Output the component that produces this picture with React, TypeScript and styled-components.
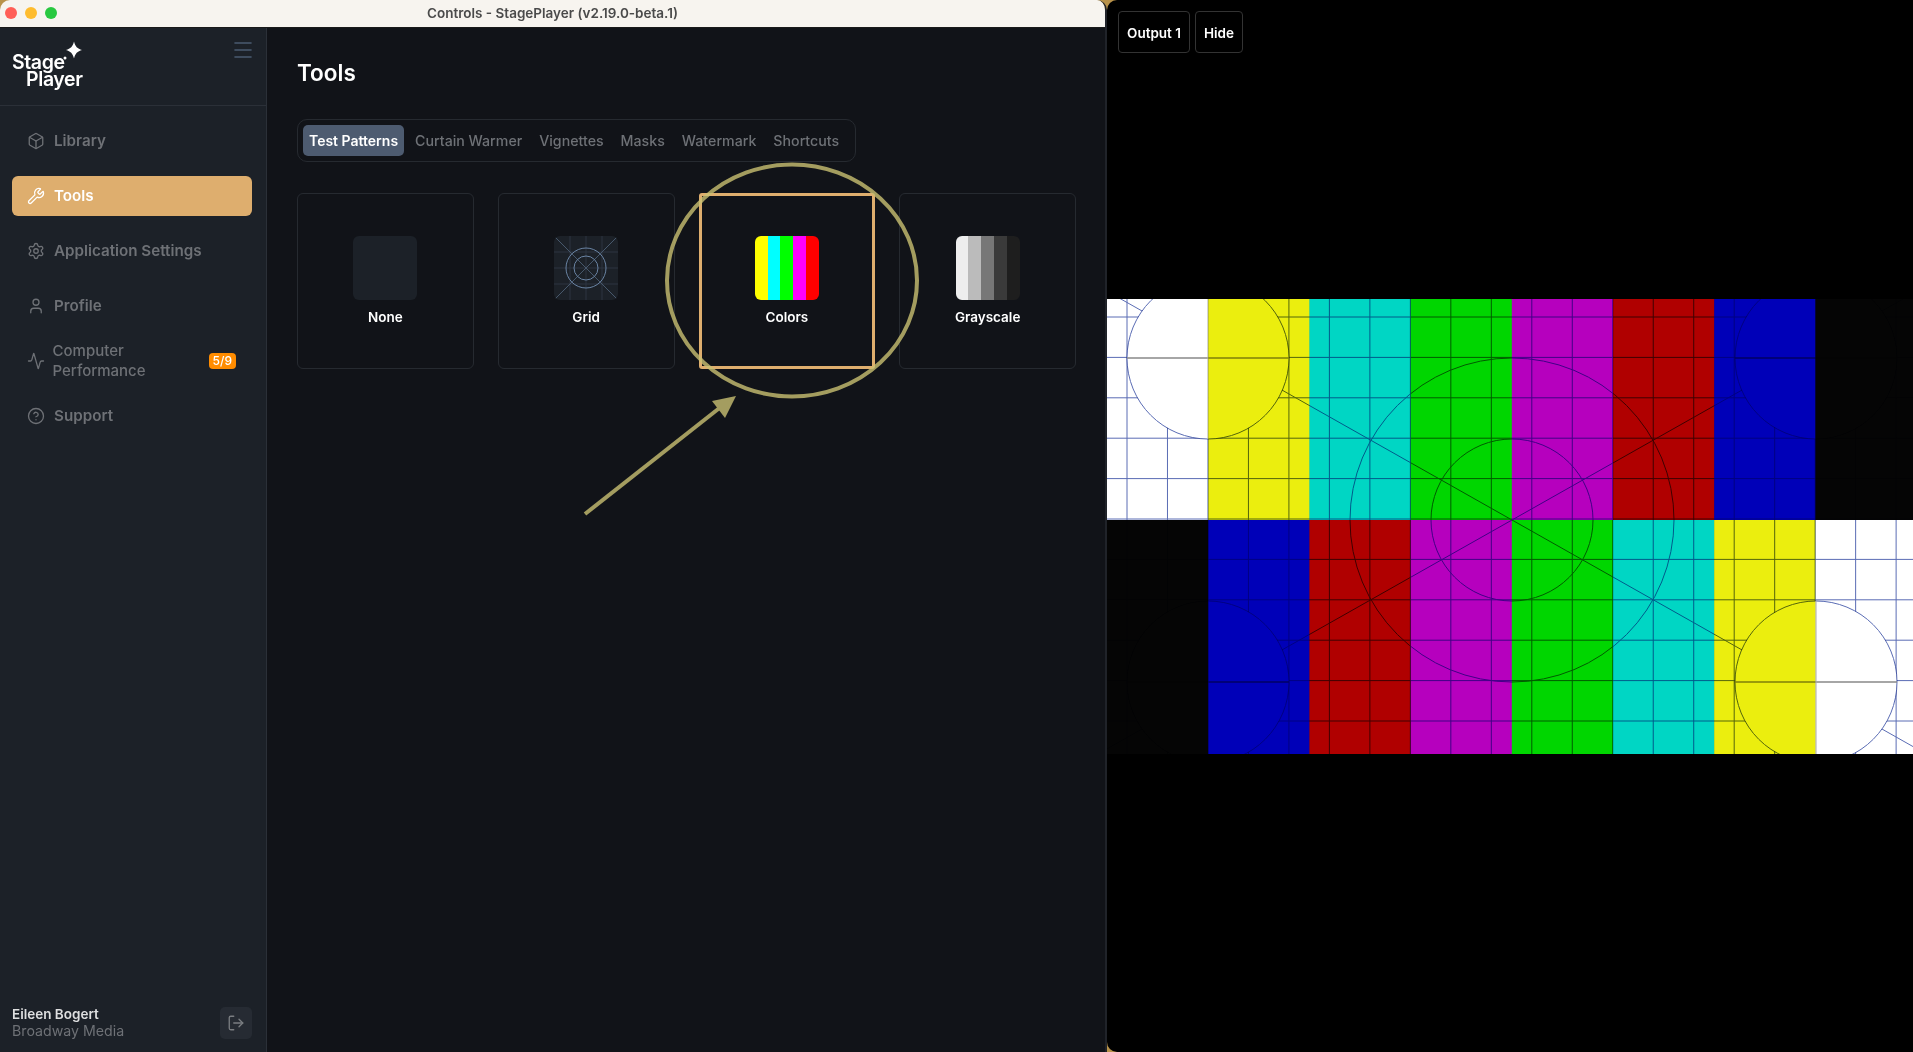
import React from 'react';
import styled, { createGlobalStyle } from 'styled-components';
import { Activity, Box, CircleHelp, LogOut, Menu, Settings, User, Wrench } from 'lucide-react';

const GlobalStyle = createGlobalStyle`
  html, body {
    margin: 0;
    padding: 0;
    background: #b8924a;
  }
  body {
    font-family: Inter, "Noto Sans", sans-serif;
    -webkit-font-smoothing: antialiased;
  }
  * {
    box-sizing: border-box;
  }
`;

const Desktop = styled.div`
  position: relative;
  display: flex;
  width: 1913px;
  height: 1052px;
  overflow: hidden;
`;

const ControlsWindow = styled.div`
  display: flex;
  flex-direction: column;
  width: 1107px;
  height: 100%;
  border-radius: 10px 10px 0 0;
  border-right: 2px solid #202329;
  overflow: hidden;
`;

const TitleBar = styled.div`
  position: relative;
  display: flex;
  align-items: center;
  justify-content: center;
  flex: 0 0 28px;
  padding-bottom: 1px;
  background: #f7f4ef;
  border-bottom: 1px solid #1a1a1a;
  color: #4a4a4a;
  font-size: 13.5px;
  font-weight: 600;
`;

const Lights = styled.div`
  position: absolute;
  left: 5px;
  top: 7px;
  display: flex;
  gap: 8px;
`;

const Light = styled.span<{ $color: string }>`
  width: 12px;
  height: 12px;
  border-radius: 50%;
  background: ${(p) => p.$color};
`;

const Body = styled.div`
  display: flex;
  flex: 1;
  min-height: 0;
`;

const Sidebar = styled.aside`
  display: flex;
  flex-direction: column;
  flex: 0 0 267px;
  background: #1c2128;
  border-right: 1px solid #2b3038;
`;

const SidebarHeader = styled.div`
  display: flex;
  align-items: flex-start;
  justify-content: space-between;
  flex: 0 0 78px;
  padding: 10px 11px 0 12px;
  border-bottom: 1px solid #2b3038;
  color: #4a5b70;
`;

const Logo = styled.div`
  position: relative;
  display: flex;
  flex-direction: column;
  margin-top: 16px;
  color: #fff;
  font-size: 19.5px;
  font-weight: 600;
  line-height: 17px;
  letter-spacing: -0.4px;
`;

const LogoIndent = styled.span`
  margin-left: 14px;
`;

const LogoStar = styled.svg`
  position: absolute;
  left: 50px;
  top: -16px;
`;

const Nav = styled.nav`
  display: flex;
  flex-direction: column;
  flex: 1;
  gap: 15px;
  padding: 15px 14px 0 12px;
`;

const NavItem = styled.div<{ $active?: boolean }>`
  display: flex;
  align-items: center;
  gap: 9px;
  height: 40px;
  padding: 0 16px 0 15px;
  border-radius: 6px;
  background: ${(p) => (p.$active ? '#deae6e' : 'transparent')};
  color: ${(p) => (p.$active ? '#fff' : '#6e7176')};
  font-size: 15.2px;
  font-weight: 600;
  line-height: 20px;

  svg {
    flex: 0 0 auto;
  }
`;

const NavLabel = styled.span<{ $wrapped?: boolean }>`
  flex: 1;
  font-size: ${(p) => (p.$wrapped ? '15px' : 'inherit')};
  font-weight: ${(p) => (p.$wrapped ? 500 : 600)};
  margin-left: ${(p) => (p.$wrapped ? '-1.5px' : '0')};
`;

const Badge = styled.span`
  padding: 1px 4px;
  border-radius: 4px;
  background: #ff8c00;
  color: #fff;
  font-size: 12px;
  font-weight: 500;
  line-height: 14px;
`;

const SidebarFooter = styled.div`
  display: flex;
  align-items: center;
  justify-content: space-between;
  padding: 0 14px 13px 12px;
`;

const UserName = styled.div`
  color: #dedfe0;
  font-size: 13.5px;
  font-weight: 600;
  line-height: 16px;
`;

const UserOrg = styled.div`
  color: #6e7176;
  font-size: 14.2px;
  line-height: 17px;
`;

const LogoutButton = styled.div`
  display: flex;
  align-items: center;
  justify-content: center;
  width: 32px;
  height: 32px;
  border-radius: 5px;
  background: #262b33;
  color: #7b7e82;
`;

const Main = styled.main`
  flex: 1;
  padding: 30px 29px 0 30px;
  background: #111318;
`;

const Title = styled.h1`
  margin: 0 0 31px;
  color: #fff;
  font-size: 22.5px;
  font-weight: 600;
  line-height: 30px;
`;

const Tabs = styled.div`
  display: inline-flex;
  gap: 5px;
  height: 43px;
  padding: 5px 10px 5px 5px;
  border: 1px solid #262a30;
  border-radius: 10px;
  vertical-align: top;
`;

const Tab = styled.div<{ $active?: boolean }>`
  display: flex;
  align-items: center;
  padding: 0 6px;
  border-radius: 5px;
  background: ${(p) => (p.$active ? '#4d5b70' : 'transparent')};
  color: ${(p) => (p.$active ? '#fff' : '#6e7176')};
  font-size: ${(p) => (p.$active ? '14px' : '14.2px')};
  font-weight: ${(p) => (p.$active ? 600 : 500)};
`;

const CardGrid = styled.div`
  display: grid;
  grid-template-columns: repeat(4, 1fr);
  gap: 24px;
  margin-top: 31px;
`;

const Card = styled.div<{ $selected?: boolean }>`
  display: flex;
  flex-direction: column;
  align-items: center;
  justify-content: center;
  gap: 8px;
  height: 176px;
  border: ${(p) => (p.$selected ? '3px solid #deae6e' : '1px solid #262a30')};
  border-radius: ${(p) => (p.$selected ? '3px' : '6px')};
`;

const Thumb = styled.div<{ $bg?: string }>`
  display: flex;
  width: 64px;
  height: 64px;
  border-radius: 6px;
  overflow: hidden;
  background: ${(p) => p.$bg ?? 'transparent'};
`;

const Stripe = styled.span<{ $color: string }>`
  flex: 1;
  background: ${(p) => p.$color};
`;

const CardLabel = styled.div`
  color: #fff;
  font-size: 13.5px;
  font-weight: 600;
  line-height: 18px;
`;

const OutputPanel = styled.section`
  position: relative;
  display: flex;
  align-items: center;
  flex: 0 0 806px;
  height: 100%;
  background: #000;
  border-radius: 10px 0 0 10px;
  overflow: hidden;
`;

const OutputActions = styled.div`
  position: absolute;
  left: 11px;
  top: 11px;
  display: flex;
  gap: 5px;
`;

const OutputButton = styled.div`
  display: flex;
  align-items: center;
  height: 42px;
  padding: 1px 8px 0;
  border: 1px solid #333;
  border-radius: 4px;
  color: #fff;
  font-size: 13.5px;
  font-weight: 600;
`;

const Pattern = styled.svg`
  display: block;
  flex: none;
`;

const LineLayer = styled.g`
  mix-blend-mode: multiply;
  fill: none;
  stroke: #5a6cb4;
  stroke-width: 1;
`;

const Annotation = styled.svg`
  position: absolute;
  left: 0;
  top: 0;
  pointer-events: none;
`;

const NAV_ITEMS = [
  { label: 'Library', icon: Box },
  { label: 'Tools', icon: Wrench, active: true },
  { label: 'Application Settings', icon: Settings },
  { label: 'Profile', icon: User },
  { label: 'Computer Performance', icon: Activity, badge: '5/9' },
  { label: 'Support', icon: CircleHelp },
];

const TABS = ['Test Patterns', 'Curtain Warmer', 'Vignettes', 'Masks', 'Watermark', 'Shortcuts'];

const COLOR_STRIPES = ['#ffff00', '#00ffff', '#00ff00', '#ff00ff', '#ff0000'];
const GRAY_STRIPES = ['#eeeeee', '#bbbbbb', '#777777', '#3a3a3a', '#1e1e1e'];

const TOP_BARS = ['#ffffff', '#ebee0e', '#00d6c4', '#00d600', '#b600be', '#b00000', '#0000b8', '#050505'];
const BOTTOM_BARS = [...TOP_BARS].reverse();

const PATTERN_W = 806;
const PATTERN_H = 455;
const BAR_W = 101.2;
const SPLIT_Y = 221;
const CENTER_X = 405;
const STEP = 40.48;
const SLOPE = 0.565;
const CORNERS = [
  [101, 59],
  [709, 59],
  [101, 383],
  [709, 383],
];

const gridXs = Array.from({ length: 20 }, (_, i) => 20 + i * STEP);
const gridYs = Array.from({ length: 11 }, (_, i) => 18 + i * 40.4);

const Bars: React.FC = () => (
  <>
    {TOP_BARS.map((c, i) => (
      <rect key={c} x={i * BAR_W} y={0} width={BAR_W + 0.5} height={SPLIT_Y} fill={c} />
    ))}
    {BOTTOM_BARS.map((c, i) => (
      <rect key={c} x={i * BAR_W} y={SPLIT_Y} width={BAR_W + 0.5} height={PATTERN_H - SPLIT_Y} fill={c} />
    ))}
  </>
);

const TestPattern: React.FC = () => (
  <Pattern width={PATTERN_W} height={PATTERN_H} viewBox={`0 0 ${PATTERN_W} ${PATTERN_H}`}>
    <defs>
      <clipPath id="corner-circles">
        {CORNERS.map(([x, y]) => (
          <circle key={`${x}-${y}`} cx={x} cy={y} r={81} />
        ))}
      </clipPath>
    </defs>
    <Bars />
    <LineLayer>
      {gridXs.map((x) => (
        <line key={x} x1={x} y1={0} x2={x} y2={PATTERN_H} />
      ))}
      {gridYs.map((y) => (
        <line key={y} x1={0} y1={y} x2={PATTERN_W} y2={y} />
      ))}
      <line x1={-20} y1={SPLIT_Y - (CENTER_X + 20) * SLOPE} x2={830} y2={SPLIT_Y + (830 - CENTER_X) * SLOPE} />
      <line x1={-20} y1={SPLIT_Y + (CENTER_X + 20) * SLOPE} x2={830} y2={SPLIT_Y - (830 - CENTER_X) * SLOPE} />
      <circle cx={CENTER_X} cy={SPLIT_Y} r={162} />
      <circle cx={CENTER_X} cy={SPLIT_Y} r={81} />
    </LineLayer>
    {/* corner circles knock the grid out, only the bars show through */}
    <g clipPath="url(#corner-circles)">
      <Bars />
    </g>
    <LineLayer>
      {CORNERS.map(([x, y]) => (
        <React.Fragment key={`${x}-${y}`}>
          <circle cx={x} cy={y} r={81} />
          <line x1={x - 81} y1={y} x2={x + 81} y2={y} strokeWidth={1.5} stroke="#888" />
          <line x1={x} y1={y - 81} x2={x} y2={y + 81} stroke="#aaa" />
        </React.Fragment>
      ))}
    </LineLayer>
  </Pattern>
);

const GridThumb: React.FC = () => (
  <Thumb $bg="#1c2128">
    <svg width="64" height="64" viewBox="0 0 64 64" fill="none">
      <g stroke="#2c3440" strokeWidth="1">
        <path d="M16 0V64M32 0V64M48 0V64M0 16H64M0 32H64M0 48H64" />
      </g>
      <path d="M0 0L64 64M64 0L0 64" stroke="#47586c" strokeWidth="1" />
      <circle cx="32" cy="32" r="20" stroke="#6a84a4" strokeWidth="1" />
      <circle cx="32" cy="32" r="12" stroke="#6a84a4" strokeWidth="1" />
    </svg>
  </Thumb>
);

const App: React.FC = () => {
  return (
    <Desktop>
      <GlobalStyle />
      <ControlsWindow>
        <TitleBar>
          <Lights>
            <Light $color="#ff5f57" />
            <Light $color="#febc2e" />
            <Light $color="#28c840" />
          </Lights>
          Controls - StagePlayer (v2.19.0-beta.1)
        </TitleBar>
        <Body>
          <Sidebar>
            <SidebarHeader>
              <Logo>
                <span>Stage</span>
                <LogoIndent>Player</LogoIndent>
                <LogoStar width="24" height="24" viewBox="0 0 24 24" fill="#fff">
                  <path d="M12 3.5C13.2 8.5 15.5 10.8 20 12C15.5 13.2 13.2 15.5 12 20.5C10.8 15.5 8.5 13.2 4 12C8.5 10.8 10.8 8.5 12 3.5Z" />
                  <circle cx="3" cy="20" r="1.5" />
                </LogoStar>
              </Logo>
              <Menu size={24} strokeWidth={1.6} />
            </SidebarHeader>
            <Nav>
              {NAV_ITEMS.map(({ label, icon: Icon, active, badge }) => (
                <NavItem key={label} $active={active}>
                  <Icon size={18} strokeWidth={1.75} />
                  <NavLabel $wrapped={!!badge}>{label}</NavLabel>
                  {badge && <Badge>{badge}</Badge>}
                </NavItem>
              ))}
            </Nav>
            <SidebarFooter>
              <div>
                <UserName>Eileen Bogert</UserName>
                <UserOrg>Broadway Media</UserOrg>
              </div>
              <LogoutButton>
                <LogOut size={18} strokeWidth={1.75} />
              </LogoutButton>
            </SidebarFooter>
          </Sidebar>
          <Main>
            <Title>Tools</Title>
            <Tabs>
              {TABS.map((t, i) => (
                <Tab key={t} $active={i === 0}>
                  {t}
                </Tab>
              ))}
            </Tabs>
            <CardGrid>
              <Card>
                <Thumb $bg="#1c2128" />
                <CardLabel>None</CardLabel>
              </Card>
              <Card>
                <GridThumb />
                <CardLabel>Grid</CardLabel>
              </Card>
              <Card $selected>
                <Thumb>
                  {COLOR_STRIPES.map((c) => (
                    <Stripe key={c} $color={c} />
                  ))}
                </Thumb>
                <CardLabel>Colors</CardLabel>
              </Card>
              <Card>
                <Thumb>
                  {GRAY_STRIPES.map((c) => (
                    <Stripe key={c} $color={c} />
                  ))}
                </Thumb>
                <CardLabel>Grayscale</CardLabel>
              </Card>
            </CardGrid>
          </Main>
        </Body>
      </ControlsWindow>
      <OutputPanel>
        <OutputActions>
          <OutputButton>Output 1</OutputButton>
          <OutputButton>Hide</OutputButton>
        </OutputActions>
        <TestPattern />
      </OutputPanel>
      <Annotation width="1913" height="1052" viewBox="0 0 1913 1052" fill="none">
        <g opacity="0.8">
          <ellipse cx="792" cy="280.5" rx="125" ry="116" stroke="#c9c072" strokeWidth="4" />
          <path d="M585 514L722 406" stroke="#c9c072" strokeWidth="4" />
          <path d="M736 396L712 401L725 418Z" fill="#c9c072" />
        </g>
      </Annotation>
    </Desktop>
  );
};

export default App;
